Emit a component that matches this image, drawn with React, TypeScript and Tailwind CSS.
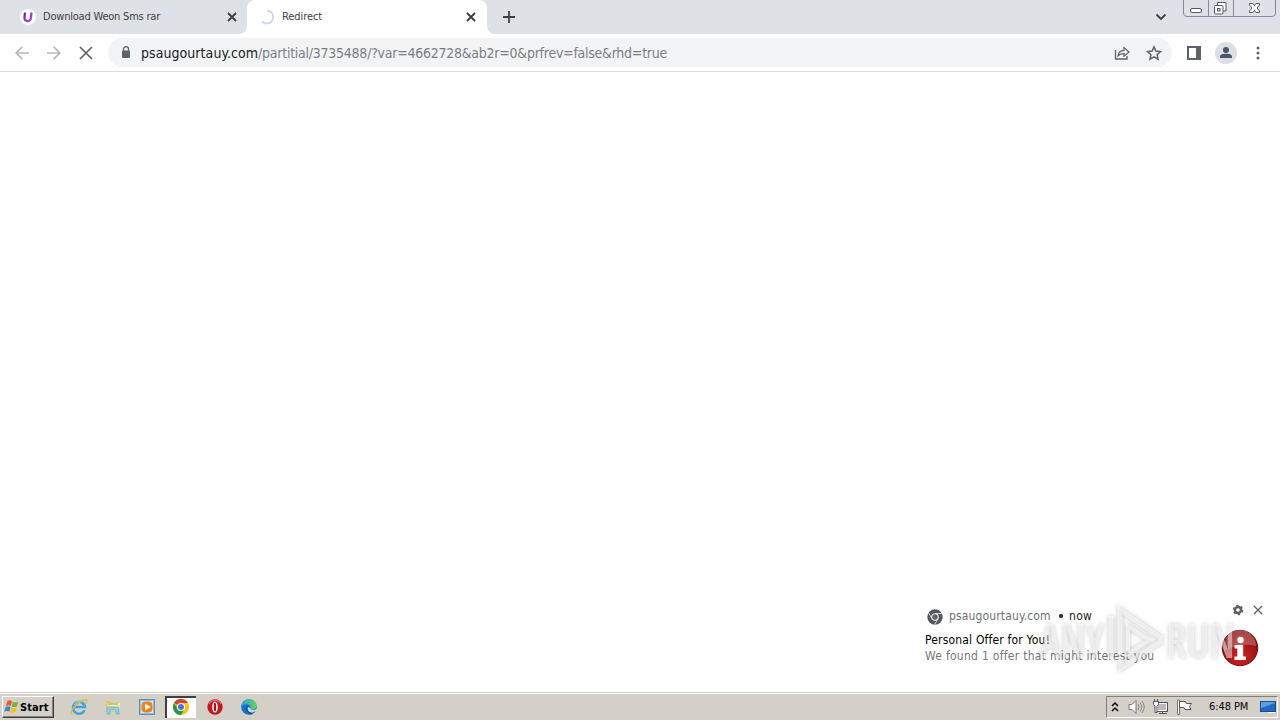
import type { ReactNode } from "react";

function UFavicon() {
  return (
    <svg width="16" height="16" viewBox="0 0 16 16">
      <defs>
        <linearGradient id="u" x1="0" y1="0" x2="1" y2="1">
          <stop offset="0" stopColor="#5b2bb5" />
          <stop offset="1" stopColor="#b04be0" />
        </linearGradient>
      </defs>
      <circle cx="8" cy="8" r="8" fill="#fff" />
      <path d="M5 3.500L4.500 8.600a3.200 3.200 0 0 0 6.400.6l.6-5.700" fill="none" stroke="url(#u)" strokeWidth="2.3" />
    </svg>
  );
}

function Cross({ size, width, color }: { size: number; width: number; color: string }) {
  return (
    <svg width={size} height={size} viewBox={`0 0 ${size} ${size}`} className="block shrink-0">
      <path d={`M1 1L${size - 1} ${size - 1}M${size - 1} 1L1 ${size - 1}`} stroke={color} strokeWidth={width} />
    </svg>
  );
}

function Arrow({ flip = false }: { flip?: boolean }) {
  return (
    <svg width="14" height="14" viewBox="0 0 14 14" className={flip ? "block rotate-180" : "block"}>
      <path d="M14 7H1.5M7.3 .8L1.2 7l6.1 6.2" fill="none" stroke="#b6b8bb" strokeWidth="1.7" />
    </svg>
  );
}

function WindowButtons() {
  return (
    <svg width="94" height="18" viewBox="0 0 94 18" className="block">
      <path d="M.5 0V13a3.500 3.500 0 0 0 3.500 3.500H89a3.500 3.500 0 0 0 3.500-3.500V0M25.500 0V16M50.500 0V16" fill="none" stroke="#858a92" />
      <rect x="7.500" y="8.500" width="11" height="4" rx="1.500" fill="#fff" stroke="#535666" />
      <path d="M34.500 5V2.500h8.500v8.500h-2.500" fill="#fff" stroke="#535666" />
      <rect x="31.500" y="5.500" width="8.500" height="8.500" rx="1" fill="#fff" stroke="#535666" />
      <rect x="34.500" y="8.500" width="2.500" height="2.500" fill="#dee1e6" stroke="#535666" />
      <path d="M66.500 3.500h3.500l1.500 2 1.500-2h3.500v1.500L74 8l2.500 3v1.500H73l-1.500-2-1.500 2h-3.500V11L69 8l-2.500-3z" fill="#fff" stroke="#535666" />
    </svg>
  );
}

function ChromeLogo({ size, gray = false }: { size: number; gray?: boolean }) {
  if (gray) {
    return (
      <svg width={size} height={size} viewBox="0 0 16 16" className="block">
        <circle cx="8" cy="8" r="7.700" fill="#53585e" />
        <path d="M8 4.500h6.800M5 9.700L1.600 3.800M11 9.700L7.600 15.600" stroke="#e8e8e8" strokeWidth=".9" />
        <circle cx="8" cy="8" r="3.300" fill="#5f6368" stroke="#f1f1f1" strokeWidth="1.100" />
      </svg>
    );
  }
  return (
    <svg width={size} height={size} viewBox="0 0 16 16" className="block">
      <circle cx="8" cy="8" r="8" fill="#fbc116" />
      <path d="M8 8L1.070 4A8 8 0 0 1 14.930 4H8z" fill="#df3b2e" />
      <path d="M1.070 4A8 8 0 0 0 8 16l3.400-6H4.600z" fill="#26984b" />
      <circle cx="8" cy="8" r="4" fill="#fff" />
      <circle cx="8" cy="8" r="3" fill="#3b79df" />
    </svg>
  );
}

function StartFlag() {
  return (
    <svg width="16" height="16" viewBox="0 0 16 16" className="block">
      <path d="M3.300 2.200C5 1 6.500 1.200 8 2.200L6.800 7C5.300 6 3.700 6 1.900 7z" fill="#e85a27" />
      <path d="M8.800 2.700c1.800 1 3.500 1 5.600-.2L13 7.200c-1.800 1-3.500 1.100-5.300.2z" fill="#72b43b" />
      <path d="M1.600 8c1.800-1 3.400-.9 5 0l-1.300 4.700C3.800 11.700 2.100 11.700.2 12.800z" fill="#3e86cf" />
      <path d="M7.400 8.400c1.800 1 3.500.8 5.400-.2l-1.400 4.900c-1.800 1-3.500 1.100-5.300.1z" fill="#f8bd25" />
    </svg>
  );
}

function ExplorerIcon() {
  return (
    <svg width="18" height="18" viewBox="0 0 18 18" className="block">
      <path d="M14.500 12.300A6 6 0 1 1 15 9H4.800" fill="none" stroke="#40a5dc" strokeWidth="2.600" />
      <path d="M4 7.300A5.500 5.500 0 0 1 12 4" fill="none" stroke="#9cdaf4" strokeWidth="1" />
      <path d="M2.700 16C-.3 16.500.8 12 6 7.200 11 2.700 17-.2 17 2.800c0 .8-.4 1.700-.9 2.500" fill="none" stroke="#e5b63a" strokeWidth="1.300" />
    </svg>
  );
}

function FolderIcon() {
  return (
    <svg width="16" height="16" viewBox="0 0 16 16" className="block">
      <path d="M1 2h4l1 1.500h8V13H1z" fill="#e9c55c" />
      <path d="M2.500 4H15v8H2.500z" fill="#fae69b" />
      <path d="M3 5h10" stroke="#7bb662" />
      <path d="M2 15V9.500A1.500 1.500 0 0 1 3.500 8h9A1.500 1.500 0 0 1 14 9.500V15h-3v-4H5v4z" fill="#91cdec" stroke="#5aa5cf" strokeWidth=".6" />
    </svg>
  );
}

function PlayerIcon() {
  return (
    <svg width="16" height="16" viewBox="0 0 16 16" className="block">
      <rect x=".5" y=".5" width="15" height="15" fill="#8dbde6" stroke="#5c91c2" />
      <rect x="2" y="2" width="12" height="12" fill="#d8ebf9" />
      <rect x="2.500" y="2.500" width="11" height="11" rx="4" fill="#f28315" />
      <path d="M6.200 4.500L11.500 8l-5.300 3.500z" fill="#fff" />
    </svg>
  );
}

function OperaIcon() {
  return (
    <svg width="16" height="16" viewBox="0 0 16 16" className="block">
      <circle cx="8" cy="8" r="7.700" fill="#c41923" />
      <path d="M2 5a6.700 6.700 0 0 1 12 0" fill="none" stroke="#e7656a" strokeWidth="1.500" />
      <ellipse cx="8" cy="8" rx="2.800" ry="5.500" fill="#fff" />
      <ellipse cx="8" cy="8" rx="1.200" ry="4.600" fill="#9e141b" />
    </svg>
  );
}

function EdgeIcon() {
  return (
    <svg width="16" height="16" viewBox="0 0 16 16" className="block">
      <defs>
        <linearGradient id="edge" x1="0" y1="0" x2="1" y2="0">
          <stop offset="0" stopColor="#269fdf" />
          <stop offset="1" stopColor="#67d654" />
        </linearGradient>
      </defs>
      <circle cx="8" cy="8" r="7.800" fill="#1673cc" />
      <path d="M.3 7.500C.8 3.200 4 .2 8 .2c4.500 0 7.800 3 7.800 6.300 0 2.500-1.800 4-4 4-1.800 0-2.900-.7-2.400-1.600C10 7 8.500 5.200 5.800 5.200 3.200 5.200 1 6.200.3 7.500z" fill="url(#edge)" />
      <path d="M6.200 8c-.8 3 1.300 5.300 4 5.400 1.800.1 3.200-.5 4.300-1.100l1.500-.5V10c-1.200.7-2.500 1-4.200.8-1.800-.2-2.900-1-2.400-2z" fill="#d4d0c8" />
      <path d="M6.200 7.500c-1.300 3 .5 6.600 4.500 7.500" fill="none" stroke="#124f9f" strokeWidth="1.600" />
    </svg>
  );
}

// Red glossy "i" badge of the push notification
function InfoBadge() {
  return (
    <svg width="38" height="38" viewBox="0 0 38 38" className="block">
      <defs>
        <radialGradient id="red" cx=".5" cy=".75" r=".7">
          <stop offset="0" stopColor="#d32424" />
          <stop offset="1" stopColor="#850c0c" />
        </radialGradient>
      </defs>
      <circle cx="19" cy="19" r="17.700" fill="url(#red)" stroke="#730b0b" />
      <path d="M3 17A16 16 0 0 1 35 17Q20 13 3 22z" fill="#fff" opacity=".25" />
      <circle cx="19.500" cy="11" r="3.200" fill="#fff" />
      <path d="M13.500 16h8.700v11.500h2.800V31H13.500v-3.500h2.800v-8h-2.800z" fill="#fff" />
    </svg>
  );
}

function Watermark() {
  return (
    <svg width="210" height="74" viewBox="0 0 210 74" className="block overflow-visible drop-shadow-[0_0_2px_rgba(0,0,0,0.4)]">
      <g fill="#fff" fillOpacity=".5">
        <text x="10" y="53" fontSize="46" fontWeight="600" textLength="64" lengthAdjust="spacingAndGlyphs" fontFamily="Open Sans, sans-serif">
          ANY
        </text>
        <text x="136" y="53" fontSize="46" fontWeight="600" textLength="69" lengthAdjust="spacingAndGlyphs" fontFamily="Open Sans, sans-serif">
          RUN
        </text>
      </g>
      <g fill="none" stroke="#fff" strokeOpacity=".6" strokeWidth="5">
        <path d="M81 11v43M90 50V5l40 27v5L91 63V54" />
        <path d="M98 21v28l21-14z" strokeWidth="4" />
      </g>
    </svg>
  );
}

function Notification() {
  return (
    <div className="absolute left-[920px] top-[602px] h-[80px] w-[354px]">
      <div className="flex h-full justify-between">
        <div className="pl-[5px] pt-[6px]">
          <div className="flex h-4 items-center text-[12px] text-[#6d7176]">
            <span className="ml-[2px] mt-[2px]"><ChromeLogo size={16} gray /></span>
            <span className="ml-[6px] w-[102px] whitespace-nowrap tracking-[0.14px]">psaugourtauy.com</span>
            <span className="ml-[8px] mr-[6px] size-[4px] rounded-full bg-[#202124]" />
            <span className="tracking-[0.3px] text-[#202124]">now</span>
          </div>
          <div className="mt-[8px] h-4 whitespace-nowrap text-[12px] leading-4 tracking-[0.18px] text-black">Personal Offer for You!</div>
          <div className="h-4 whitespace-nowrap text-[12px] leading-4 tracking-[0.28px] text-[#74777b]">We found 1 offer that might interest you</div>
        </div>
        <div className="flex w-[60px] flex-col">
          <div className="flex items-center gap-[9px] pl-[18px] pt-[2px]">
            <svg width="12" height="12" viewBox="0 0 12 12">
              <circle cx="6" cy="6" r="3" fill="none" stroke="#5f6368" strokeWidth="2.400" />
              <circle cx="6" cy="6" r="4.500" fill="none" stroke="#5f6368" strokeWidth="1.500" strokeDasharray="2.400 2.312" />
            </svg>
            <Cross size={10} width={1.300} color="#5f6368" />
          </div>
          <div className="ml-[7px] mt-[13px]"><InfoBadge /></div>
        </div>
      </div>
      <div className="absolute left-[110px] top-[3px]"><Watermark /></div>
    </div>
  );
}

function TaskSlot({ children, active = false }: { children: ReactNode; active?: boolean }) {
  return (
    <div
      className={
        active
          ? "flex h-[22px] w-[31px] items-center justify-center border-l-2 border-t-2 border-[#404040] bg-white pr-[2px] pb-[2px]"
          : "flex h-[22px] w-[31px] items-center justify-center"
      }
    >
      {children}
    </div>
  );
}

function Taskbar() {
  return (
    <div className="flex h-[28px] items-center border-t border-[#d4d0c8] bg-[#d4d0c8] shadow-[inset_0_1px_0_#fff]">
      <div className="ml-[2px] mt-px flex h-[22px] w-[52px] items-center border border-b-[#404040] border-l-white border-r-[#404040] border-t-white pl-[1px] shadow-[inset_-1px_-1px_0_#808080]">
        <StartFlag />
        <span className="text-[11px] font-bold leading-none tracking-[0.1px] text-black">Start</span>
      </div>
      <div className="ml-[9px] mt-px flex gap-[3px]">
        <TaskSlot><ExplorerIcon /></TaskSlot>
        <TaskSlot><FolderIcon /></TaskSlot>
        <TaskSlot><PlayerIcon /></TaskSlot>
        <TaskSlot active><ChromeLogo size={16} /></TaskSlot>
        <TaskSlot><OperaIcon /></TaskSlot>
        <TaskSlot><EdgeIcon /></TaskSlot>
      </div>
      <div className="ml-auto mr-[2px] mt-px flex h-[22px] w-[172px] items-center border border-b-white border-l-[#808080] border-r-white border-t-[#808080]">
        <svg width="8" height="12" viewBox="0 0 8 12" className="ml-[4px]">
          <path d="M1 5l3-3 3 3M1 10l3-3 3 3" fill="none" stroke="#000" strokeWidth="1.500" />
        </svg>
        <svg width="17" height="16" viewBox="0 0 17 16" className="ml-[9px]">
          <path d="M1 5.500h3l4-4v13l-4-4H1z" fill="#fff" stroke="#777" />
          <path d="M10 5q2 3 0 6M12 3.500q3.500 4.500 0 9M14 2q4.500 6 0 12" fill="none" stroke="#888" />
        </svg>
        <svg width="17" height="16" viewBox="0 0 17 16" className="ml-[7px]">
          <rect x="4.500" y="3.500" width="11" height="9" fill="#b9b9b9" stroke="#555" />
          <path d="M5.500 4.500h9v7h-9z" fill="none" stroke="#fff" />
          <path d="M7 14.500h8M10.500 13v1" stroke="#555" />
          <path d="M1.500 2.500h5v3l-1.500 1.500v6.500H3V7L1.500 5.500zM2.500 0v2M5.500 0v2" fill="#fff" stroke="#555" />
        </svg>
        <svg width="17" height="16" viewBox="0 0 17 16" className="ml-[7px]">
          <path d="M1.500 1v14.500h2V1z" fill="#fff" stroke="#777" />
          <path d="M3.500 2.500h6l1 2h5l-2 3 1.500 3H9l-1-2H3.500z" fill="#fff" stroke="#555" />
        </svg>
        <span className="ml-[16px] w-[42px] whitespace-nowrap pt-px text-[11px] tracking-[-0.08px] text-black">6:48 PM</span>
        <svg width="16" height="14" viewBox="0 0 16 14" className="ml-[9px]">
          <rect x=".5" y="1.500" width="15" height="10" fill="#2268be" stroke="#194b8f" />
          <path d="M1 2h14v1L1 8z" fill="#5ba0e2" />
          <path d="M8 12.500h7" stroke="#fff" />
        </svg>
      </div>
    </div>
  );
}

export default function App() {
  return (
    <div className="relative flex h-[720px] w-[1280px] flex-col overflow-hidden bg-white font-['DejaVu_Sans_Condensed','DejaVu_Sans',sans-serif] [font-stretch:condensed]">
      {/* Tab strip */}
      <div className="flex h-[34px] bg-[#dee1e6] text-[11px] text-[#3c4043]">
        {/* white behind the rounded corner gives the active tab its flared foot */}
        <div className="w-[247px] bg-white">
          <div className="flex h-full items-center rounded-br-lg bg-[#dee1e6] pl-5 pr-[10px]">
            <UFavicon />
            <span className="ml-[7px] whitespace-nowrap tracking-[-0.21px]">Download Weon Sms rar</span>
            <span className="ml-auto"><Cross size={10} width={1.900} color="#3c4043" /></span>
          </div>
        </div>
        <div className="w-[240px]">
          <div className="flex h-full items-center rounded-t-lg bg-white pl-3 pr-[11px]">
            <svg width="16" height="16" viewBox="0 0 16 16">
              <path d="M8.500 1.500A6.500 6.500 0 1 1 3 12.500" fill="none" stroke="#c6d7f8" strokeWidth="1.800" />
            </svg>
            <span className="ml-[7px] tracking-[-0.08px]">Redirect</span>
            <span className="ml-auto"><Cross size={10} width={1.900} color="#3c4043" /></span>
          </div>
        </div>
        <div className="flex-1 bg-white">
          <div className="flex h-full rounded-bl-lg bg-[#dee1e6]">
            <svg width="12" height="12" viewBox="0 0 12 12" className="ml-4 mt-[11px]">
              <path d="M6 0v12M0 6h12" stroke="#3c4043" strokeWidth="1.800" />
            </svg>
            <svg width="12" height="8" viewBox="0 0 12 8" className="ml-auto mr-4 mt-[13px]">
              <path d="M1.500 1.500L6 6l4.500-4.500" fill="none" stroke="#3c4043" strokeWidth="1.800" />
            </svg>
            <WindowButtons />
            <div className="w-[3px]" />
          </div>
        </div>
      </div>

      {/* Toolbar */}
      <div className="flex h-[38px] items-center border-b border-[#d9dadc] bg-white pl-[15px]">
        <Arrow />
        <div className="ml-[18px]"><Arrow flip /></div>
        <div className="ml-[18px]"><Cross size={14} width={1.700} color="#5f6368" /></div>
        <div className="ml-[15px] flex h-[29px] w-[1064px] items-center rounded-full bg-[#f1f3f4] pl-[13px] pr-[10px]">
          <svg width="10" height="13" viewBox="0 0 10 13">
            <path d="M2.500 5V3.200a2.500 2.500 0 0 1 5 0V5" fill="none" stroke="#5f6368" strokeWidth="1.300" />
            <rect x="1" y="4.500" width="8" height="7.500" rx="1" fill="#5f6368" />
          </svg>
          <span className="ml-[10px] whitespace-nowrap pt-px text-[14px] tracking-[-0.25px] text-[#7b7f84]">
            <span className="tracking-[0.06px] text-[#202124]">psaugourtauy.com</span>/partitial/3735488/?var=4662728&amp;ab2r=0&amp;prfrev=false&amp;rhd=true
          </span>
          <svg width="16" height="16" viewBox="0 0 16 16" className="ml-auto">
            <path d="M1.500 5v9h11.500v-3" fill="none" stroke="#5f6368" strokeWidth="1.300" />
            <path d="M4 11c.3-3.800 2.500-5.500 6-5.700V2.500L15 7l-5 4.300V8.600C7.500 8.600 5.500 9 4 11z" fill="none" stroke="#5f6368" strokeWidth="1.200" />
          </svg>
          <svg width="16" height="16" viewBox="0 0 16 16" className="ml-4">
            <path d="M8 1.900l1.900 4.200 4.600.5-3.400 3.100.9 4.500-4-2.300-4 2.300.9-4.500-3.400-3.100 4.600-.5z" fill="none" stroke="#5f6368" strokeWidth="1.500" />
          </svg>
        </div>
        <svg width="14" height="14" viewBox="0 0 14 14" className="ml-[15px]">
          <rect x="1" y="1" width="12" height="12" fill="none" stroke="#5f6368" strokeWidth="2" />
          <path d="M9 1h4v12H9z" fill="#5f6368" />
        </svg>
        <svg width="22" height="22" viewBox="0 0 22 22" className="ml-[14px]">
          <circle cx="11" cy="11" r="11" fill="#dce0e5" />
          <circle cx="11" cy="8" r="3" fill="#4c5570" />
          <path d="M5 16v-1.500C5 12 9 11.700 11 11.700s6 .3 6 2.800V16z" fill="#4c5570" />
        </svg>
        <svg width="4" height="14" viewBox="0 0 4 14" className="ml-[19px]">
          <circle cx="2" cy="2" r="1.500" fill="#5f6368" />
          <circle cx="2" cy="7" r="1.500" fill="#5f6368" />
          <circle cx="2" cy="12" r="1.500" fill="#5f6368" />
        </svg>
      </div>

      <div className="flex-1 bg-white" />
      <Taskbar />
      <Notification />
    </div>
  );
}
